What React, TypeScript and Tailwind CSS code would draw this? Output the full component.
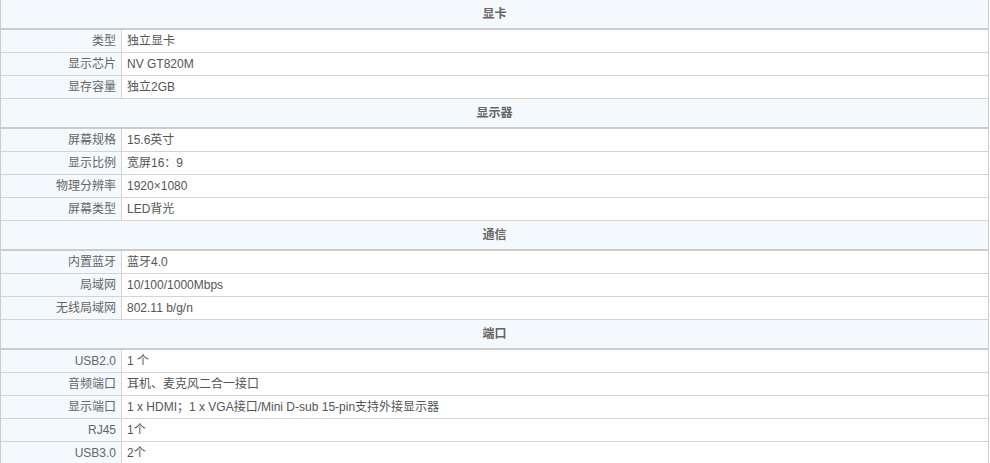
import React from 'react';

type Section = {
  title: string;
  rows: [string, string][];
};

const SECTIONS: Section[] = [
  {
    title: '显卡',
    rows: [
      ['类型', '独立显卡'],
      ['显示芯片', 'NV GT820M'],
      ['显存容量', '独立2GB'],
    ],
  },
  {
    title: '显示器',
    rows: [
      ['屏幕规格', '15.6英寸'],
      ['显示比例', '宽屏16：9'],
      ['物理分辨率', '1920×1080'],
      ['屏幕类型', 'LED背光'],
    ],
  },
  {
    title: '通信',
    rows: [
      ['内置蓝牙', '蓝牙4.0'],
      ['局域网', '10/100/1000Mbps'],
      ['无线局域网', '802.11 b/g/n'],
    ],
  },
  {
    title: '端口',
    rows: [
      ['USB2.0', '1 个'],
      ['音频端口', '耳机、麦克风二合一接口'],
      ['显示端口', '1 x HDMI；1 x VGA接口/Mini D-sub 15-pin支持外接显示器'],
      ['RJ45', '1个'],
      ['USB3.0', '2个'],
    ],
  },
];

const App = () => {
  return (
    <div
      className="w-[989px] bg-white border-x border-[#cccccc] text-[12px] text-[#666666]"
      style={{ fontFamily: '"Liberation Sans", Arial, "Noto Sans CJK SC", sans-serif' }}
    >
      {SECTIONS.map((section) => (
        <div key={section.title}>
          <div className="h-[30px] bg-[#f4f9fe] border-b-2 border-[#cccccc] flex items-center justify-center font-bold text-[#666666]">
            {section.title}
          </div>
          {section.rows.map(([label, value]) => (
            <div key={label} className="h-[23px] flex border-b border-[#d4d4d4]">
              <div className="w-[121px] shrink-0 bg-[#f4f9fe] border-r border-[#d4d4d4] flex items-center justify-end pr-[5px]">
                {label}
              </div>
              <div className="flex-1 flex items-center pl-[5px] text-[#555555]">{value}</div>
            </div>
          ))}
        </div>
      ))}
    </div>
  );
};

export default App;
